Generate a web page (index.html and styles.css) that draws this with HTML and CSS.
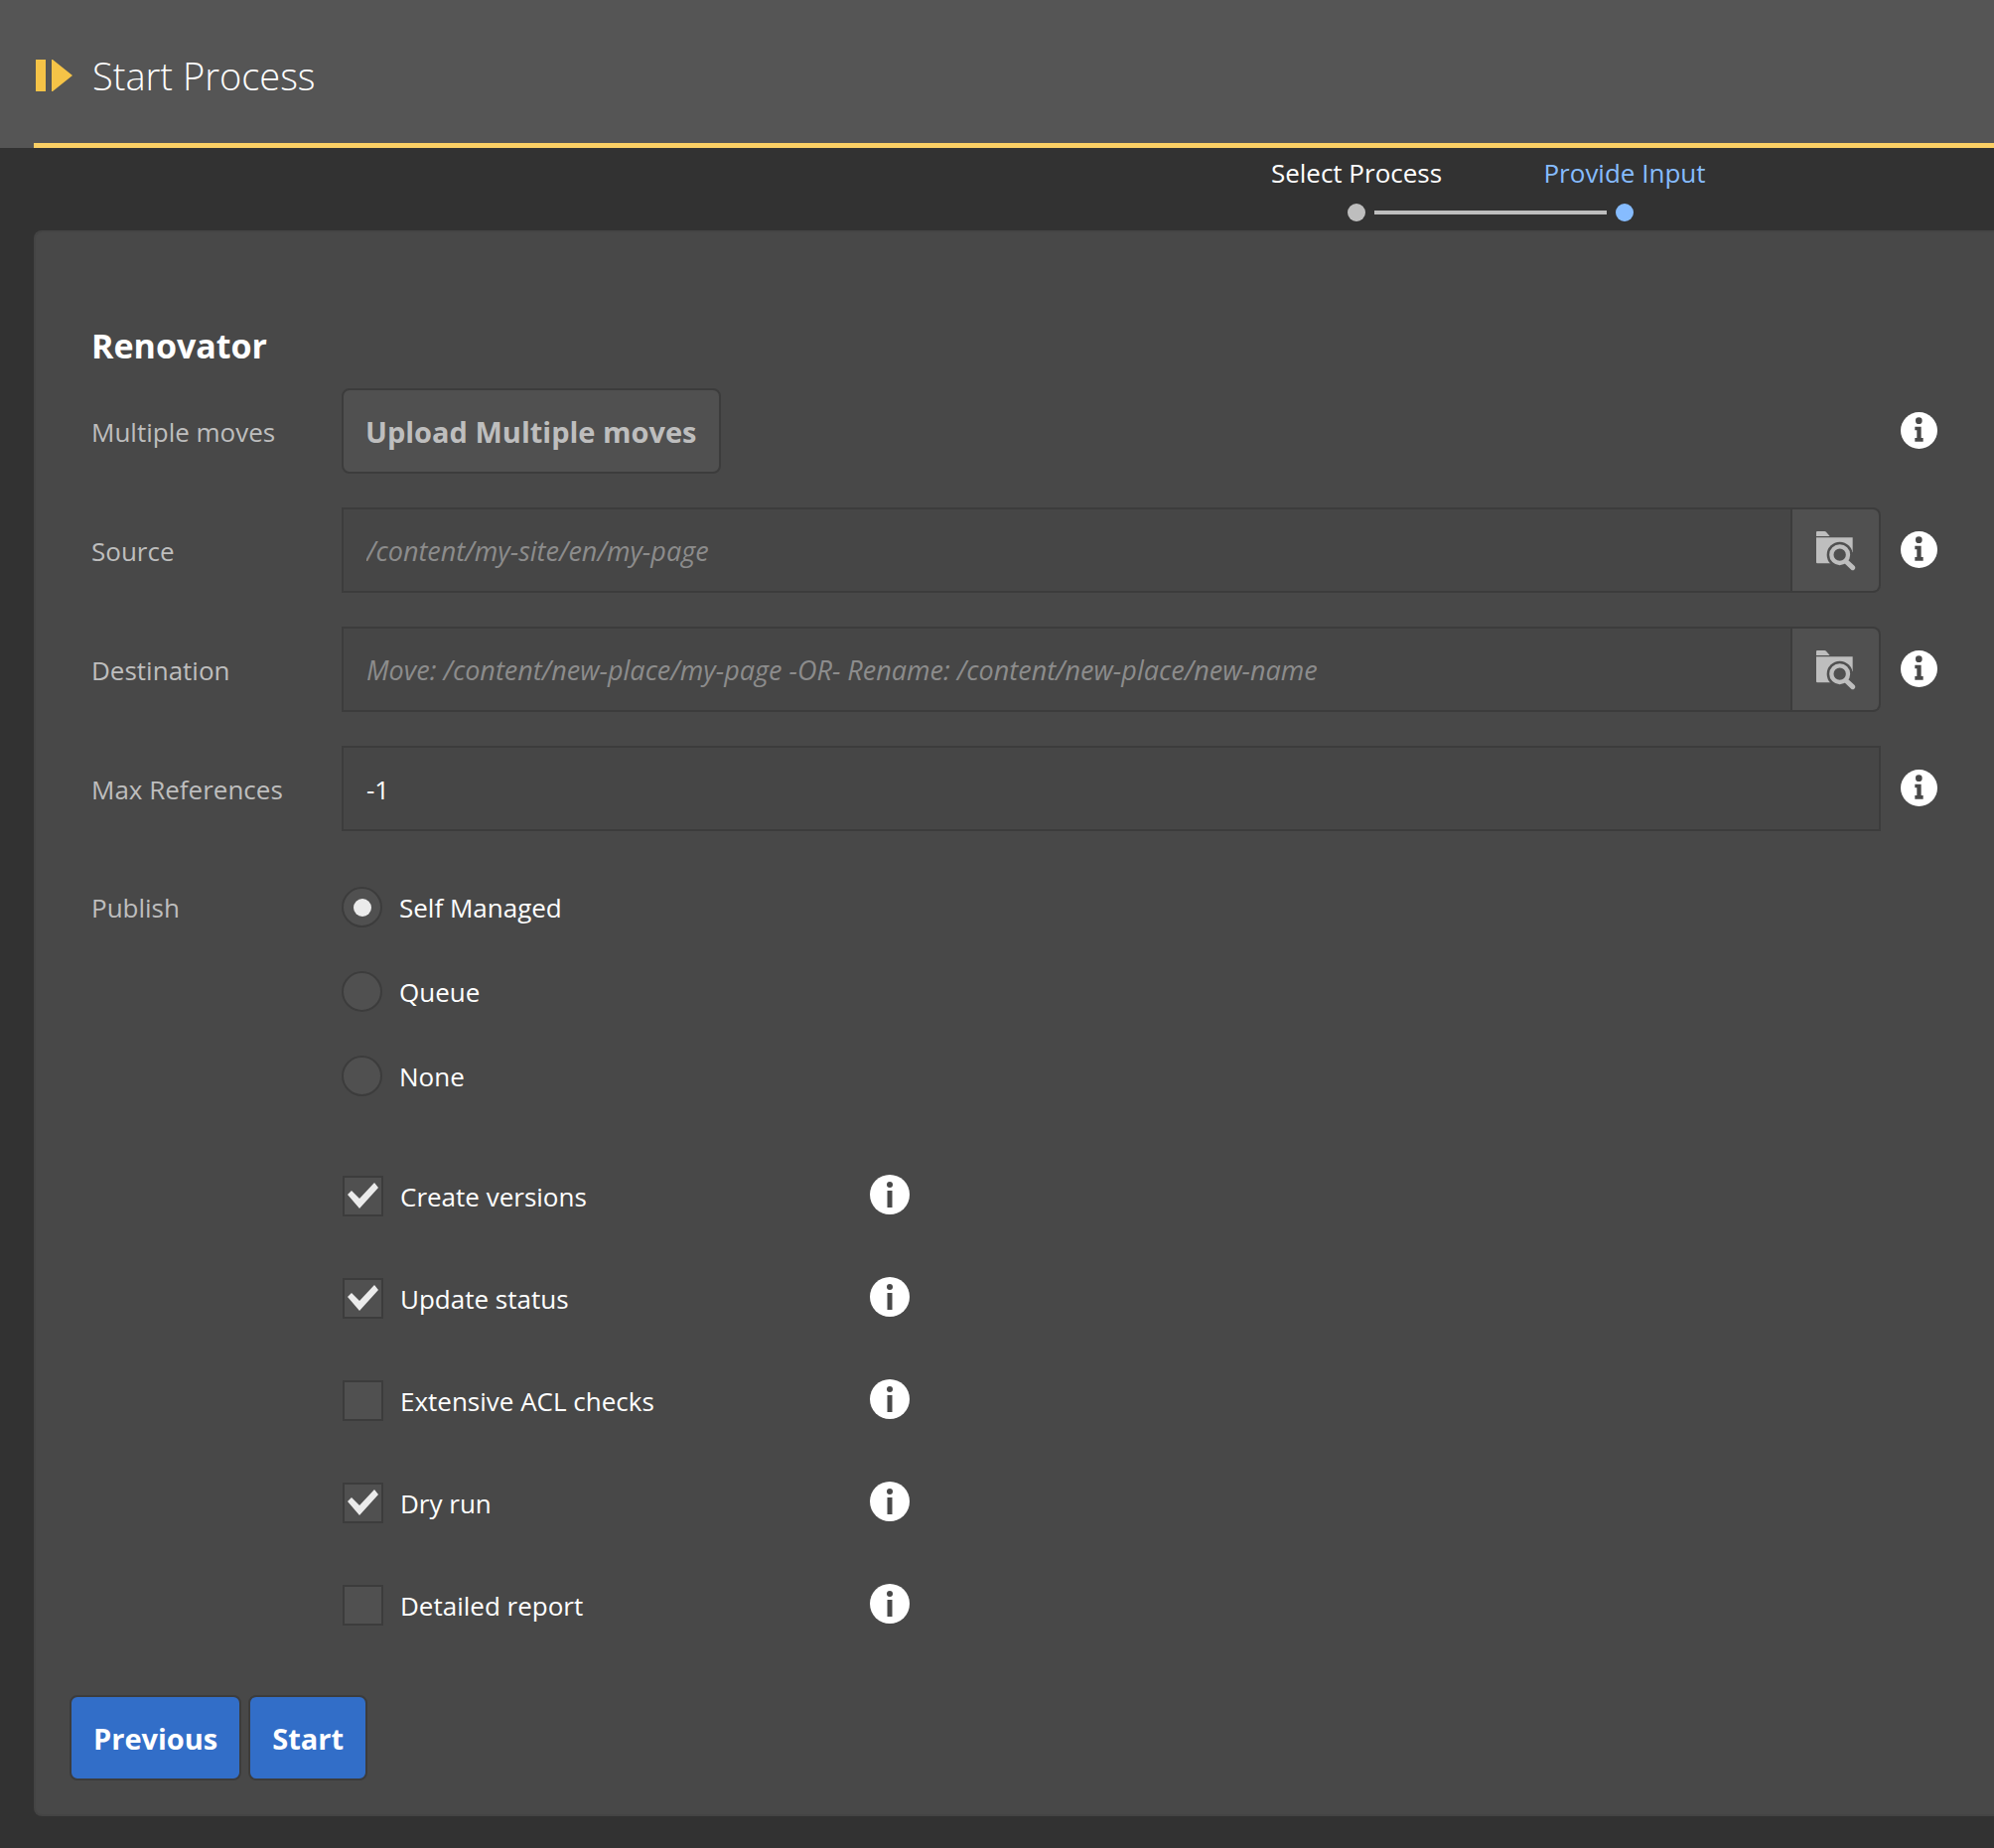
FILE: index.html
```html
<!DOCTYPE html>
<html lang="en">
<head>
<meta charset="utf-8">
<meta name="viewport" content="width=device-width, initial-scale=1">
<title>Start Process</title>
<link rel="stylesheet" href="styles.css">
</head>
<body>
<svg class="symbols" aria-hidden="true">
  <symbol id="info" viewBox="0 0 111 111">
    <circle cx="55.500" cy="55.500" r="55.500" fill="#fff"/>
    <circle cx="55" cy="26" r="10" fill="#484848"/>
    <path d="M43 44H62V78H68V89H43V78H49V55H43Z" fill="#484848"/>
  </symbol>
  <symbol id="info-plain" viewBox="0 0 40 40">
    <circle cx="20" cy="20" r="20" fill="#fff"/>
    <circle cx="20" cy="10" r="3" fill="#484848"/>
    <rect x="17.500" y="16" width="5" height="17" fill="#484848"/>
  </symbol>
  <symbol id="browse" viewBox="387 491 123 123">
    <path d="M390 509V497Q390 494 393 494H415Q418 494 420 496L431 509Z" fill="#bebebe"/>
    <path d="M390 513H500V588Q500 591 497 591H393Q390 591 390 588Z" fill="#bebebe"/>
    <circle cx="461" cy="565" r="39" fill="#505050"/>
    <path d="M490 550L503 560V600H440V588Z" fill="#505050"/>
    <circle cx="461" cy="565" r="25" fill="none" stroke="#bebebe" stroke-width="13"/>
    <path d="M482 587L500 604" stroke="#bebebe" stroke-width="15" stroke-linecap="round"/>
  </symbol>
</svg>

<header class="header">
  <div class="header-bar">
    <svg class="logo" viewBox="0 0 37 32" aria-hidden="true">
      <path d="M0 0H10V32H0Z M16 0H17L37 16L17 32H16Z" fill="#f5c347"/>
    </svg>
    <h1 class="title">Start Process</h1>
  </div>
</header>

<ol class="steps">
  <li class="step"><span>Select Process</span><i class="dot"></i></li>
  <li class="step current" aria-current="step"><span>Provide Input</span><i class="dot"></i></li>
</ol>

<main class="panel">
  <form class="form">
    <h2 class="heading">Renovator</h2>
    <div class="row">
      <label class="label" for="upload">Multiple moves</label>
      <div class="field"><button class="button" type="button" id="upload">Upload Multiple moves</button></div>
      <svg class="info" role="img" aria-label="Info"><use href="#info"/></svg>
    </div>
    <div class="row">
      <label class="label" for="source">Source</label>
      <div class="field">
        <input class="input" type="text" id="source" placeholder="/content/my-site/en/my-page">
        <button class="browse" type="button" aria-label="Browse"><svg class="browse-icon"><use href="#browse"/></svg></button>
      </div>
      <svg class="info" role="img" aria-label="Info"><use href="#info"/></svg>
    </div>
    <div class="row">
      <label class="label" for="destination">Destination</label>
      <div class="field">
        <input class="input" type="text" id="destination" placeholder="Move: /content/new-place/my-page -OR- Rename: /content/new-place/new-name">
        <button class="browse" type="button" aria-label="Browse"><svg class="browse-icon"><use href="#browse"/></svg></button>
      </div>
      <svg class="info" role="img" aria-label="Info"><use href="#info"/></svg>
    </div>
    <div class="row">
      <label class="label" for="max">Max References</label>
      <div class="field"><input class="input" type="text" id="max" value="-1"></div>
      <svg class="info" role="img" aria-label="Info"><use href="#info"/></svg>
    </div>
    <div class="row options" role="radiogroup" aria-labelledby="publish">
      <span class="label option-label" id="publish">Publish</span>
      <div class="radios">
        <label class="choice"><input class="radio" type="radio" name="publish" checked>Self Managed</label>
        <label class="choice"><input class="radio" type="radio" name="publish">Queue</label>
        <label class="choice"><input class="radio" type="radio" name="publish">None</label>
      </div>
    </div>
    <div class="checks">
      <div class="check-row"><label class="choice"><input class="check" type="checkbox" checked>Create versions</label><svg class="info-plain" role="img" aria-label="Info"><use href="#info-plain"/></svg></div>
      <div class="check-row"><label class="choice"><input class="check" type="checkbox" checked>Update status</label><svg class="info-plain" role="img" aria-label="Info"><use href="#info-plain"/></svg></div>
      <div class="check-row"><label class="choice"><input class="check" type="checkbox">Extensive ACL checks</label><svg class="info-plain" role="img" aria-label="Info"><use href="#info-plain"/></svg></div>
      <div class="check-row"><label class="choice"><input class="check" type="checkbox" checked>Dry run</label><svg class="info-plain" role="img" aria-label="Info"><use href="#info-plain"/></svg></div>
      <div class="check-row"><label class="choice"><input class="check" type="checkbox">Detailed report</label><svg class="info-plain" role="img" aria-label="Info"><use href="#info-plain"/></svg></div>
    </div>
  </form>
  <div class="actions">
    <button class="button primary" type="button">Previous</button>
    <button class="button primary" type="button">Start</button>
  </div>
</main>
</body>
</html>
```

FILE: styles.css
```css
* { box-sizing: border-box; }

body {
  margin: 0;
  background: #323232;
  color: #fff;
  font: 26px/36px "Open Sans", "Noto Sans", sans-serif;
}

input, button { font: inherit; color: inherit; margin: 0; }
.symbols { display: none; }

.header { background: #555; padding-left: 34px; }
.header-bar {
  display: flex;
  align-items: center;
  gap: 20px;
  padding: 44px 2px 36px;
  border-bottom: 5px solid #fbd065;
}
.logo { width: 37px; height: 32px; }
.title { margin: 0; font: 300 38px/64px "Open Sans", sans-serif; }

.steps {
  display: flex;
  justify-content: flex-end;
  list-style: none;
  margin: 0;
  padding: 7px 237px 9px 0;
}
.step {
  display: grid;
  justify-items: center;
  gap: 13px;
  width: 270px;
}
.step.current { color: #86bcff; }
.dot {
  display: grid;
  align-items: center;
  width: 18px;
  height: 18px;
  border-radius: 50%;
  background: #bebebe;
}
.current .dot { background: #86bcff; }
.step:first-child .dot::after {
  content: "";
  width: 234px;
  height: 4px;
  margin-left: 27px;
  background: #bebebe;
}

.panel {
  margin: 0 0 32px 34px;
  padding: 0 57px 34px 0;
  background: #484848;
  border: 2px solid #444;
  border-right: 0;
  border-radius: 8px 0 0 8px;
}
.form { padding: 90px 0 0 56px; }
.heading { margin: 0 0 19px; font: 700 34px/48px "Open Sans", sans-serif; }

.row {
  display: grid;
  grid-template-columns: 252px 1fr 37px;
  align-items: center;
  margin-bottom: 34px;
}
.label { padding-top: 2px; color: #bebebe; }
.field { display: flex; margin-right: 20px; }
.info { width: 37px; height: 37px; margin-bottom: 2px; }

.button {
  height: 86px;
  padding: 2px 22px 0;
  border: 2px solid #3c3c3c;
  border-radius: 8px;
  background: #505050;
  color: #bebebe;
  font-size: 29px;
  font-weight: 700;
}
.input {
  flex: 1;
  min-width: 0;
  height: 86px;
  padding: 2px 23px 0;
  border: 2px solid #3c3c3c;
  background: #464646;
  outline: 0;
}
.input::placeholder { color: #8c8c8c; font-size: 27px; font-style: italic; opacity: 1; }
.browse {
  display: grid;
  place-items: center;
  width: 89px;
  height: 86px;
  padding: 0;
  border: 2px solid #3c3c3c;
  border-left: 0;
  border-radius: 0 8px 8px 0;
  background: #505050;
}
.browse-icon { width: 41px; height: 41px; }

.options { align-items: start; margin-bottom: 0; }
.choice { display: flex; align-items: center; gap: 17px; }
.radios .choice, .option-label { height: 85px; }
.option-label { display: flex; align-items: center; padding-top: 0; }
.radio, .check {
  appearance: none;
  display: grid;
  place-items: center;
  width: 41px;
  height: 41px;
  border: 2px solid #3c3c3c;
  background: #505050;
}
.radio { border-radius: 50%; }
.radio:checked::before {
  content: "";
  width: 18px;
  height: 18px;
  border-radius: 50%;
  background: #ebebeb;
}
.check:checked::before {
  content: "";
  width: 37px;
  height: 37px;
  background: #ebebeb;
  clip-path: polygon(3px 17px, 7px 13px, 15px 21px, 30px 5px, 34px 10px, 15px 31px);
}

.checks { padding: 27px 0 0 253px; }
.check-row { display: grid; grid-template-columns: 531px 40px; align-items: center; height: 103px; }
.info-plain { width: 40px; height: 40px; margin-bottom: 4px; }

.actions { display: flex; gap: 7px; padding: 39px 0 0 34px; }
.primary { background: #326ec8; color: #fff; }
```
